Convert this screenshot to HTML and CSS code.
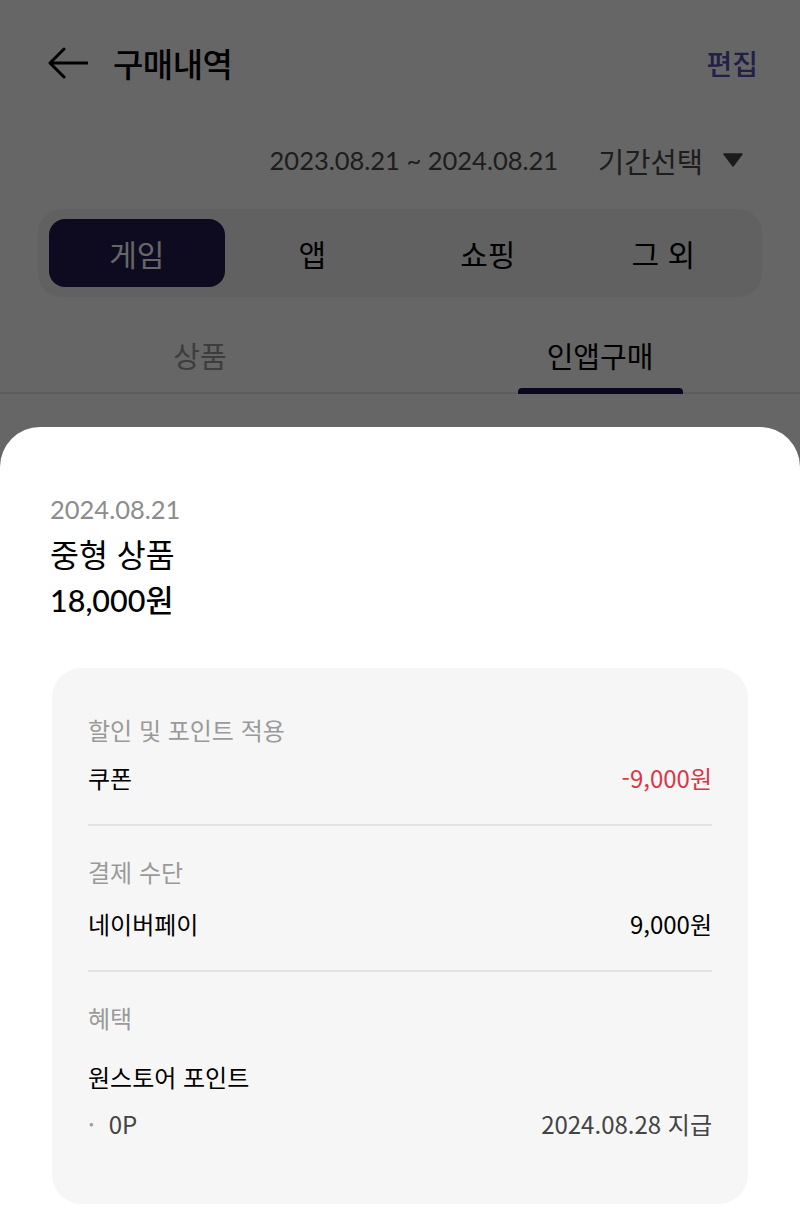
FILE: index.html
```html
<!DOCTYPE html>
<html lang="ko">
<head>
    <meta charset="UTF-8">
    <title>구매내역</title>
    <link rel="stylesheet" href="styles.css">
</head>
<body>
    <div class="page">
        <div class="header">
            <svg class="back" width="40" height="32" viewBox="0 0 40 32">
                <path d="M39 16H3M16 2L2 16L16 30" fill="none" stroke="#000" stroke-width="3" stroke-linecap="round" stroke-linejoin="round"/>
            </svg>
            <h1>구매내역</h1>
            <span class="edit">편집</span>
        </div>
        <div class="period">
            <span class="range">2023.08.21 ~ 2024.08.21</span>
            <span class="select">기간선택</span>
            <svg width="20" height="14" viewBox="0 0 20 14">
                <path d="M1 1H19L10 13Z" fill="#444" stroke="#444" stroke-width="1.5" stroke-linejoin="round"/>
            </svg>
        </div>
        <div class="segments">
            <div class="segment active">게임</div>
            <div class="segment">앱</div>
            <div class="segment">쇼핑</div>
            <div class="segment">그 외</div>
        </div>
        <div class="subtabs">
            <div class="subtab">상품</div>
            <div class="subtab active">인앱구매</div>
        </div>
    </div>

    <div class="dim"></div>

    <div class="sheet">
        <div class="date">2024.08.21</div>
        <div class="name">중형 상품</div>
        <div class="price">18,000원</div>

        <div class="card">
            <div class="section">
                <div class="label">할인 및 포인트 적용</div>
                <div class="row">
                    <span>쿠폰</span>
                    <span class="minus">-9,000원</span>
                </div>
            </div>
            <div class="section">
                <div class="label">결제 수단</div>
                <div class="row">
                    <span>네이버페이</span>
                    <span>9,000원</span>
                </div>
            </div>
            <div class="section">
                <div class="label">혜택</div>
                <div class="row benefit">원스토어 포인트</div>
                <div class="row sub">
                    <span><i class="dot">·</i>0P</span>
                    <span>2024.08.28 지급</span>
                </div>
            </div>
        </div>
    </div>
</body>
</html>
```

FILE: styles.css
```css
body {
    margin: 0;
    background-color: white;
    font-family: Lato, "Noto Sans CJK KR", sans-serif;
    color: #000;
}
.header {
    height: 126px;
    display: flex;
    align-items: center;
    padding: 0 42px 0 48px;
}
.back {
    margin-right: 25px;
}
.header h1 {
    flex: 1;
    margin: 0;
    font-family: "Noto Sans CJK KR", sans-serif;
    font-size: 33px;
    font-weight: 500;
    letter-spacing: -0.5px;
}
.edit {
    font-family: "Noto Sans CJK KR", sans-serif;
    font-size: 28px;
    font-weight: 500;
    color: #5450b4;
}
.period {
    height: 68px;
    display: flex;
    align-items: center;
    justify-content: flex-end;
    padding-right: 57px;
    color: #4a4a4a;
}
.range {
    font-size: 25.5px;
    margin-right: 40px;
}
.select {
    font-family: "Noto Sans CJK KR", sans-serif;
    font-size: 28.5px;
    margin-right: 20px;
}
.segments {
    margin: 15px 38px 0;
    padding: 10px 11px;
    display: grid;
    grid-template-columns: repeat(4, 1fr);
    background-color: #f3f3f3;
    border-radius: 24px;
}
.segment {
    height: 68px;
    display: flex;
    align-items: center;
    justify-content: center;
    font-family: "Noto Sans CJK KR", sans-serif;
    font-size: 30px;
}
.segment.active {
    background-color: #231c50;
    color: white;
    border-radius: 16px;
}
.subtabs {
    display: grid;
    grid-template-columns: 1fr 1fr;
    border-bottom: 2px solid #e8e8e8;
}
.subtab {
    display: flex;
    flex-direction: column;
    align-items: center;
    padding-top: 42px;
    font-family: "Noto Sans CJK KR", sans-serif;
    font-size: 29px;
    line-height: 32px;
    color: #999;
}
.subtab::after {
    content: "";
    display: block;
    width: 165px;
    height: 6px;
    margin-top: 17px;
    margin-bottom: -2px;
    border-radius: 4px 4px 0 0;
}
.subtab.active {
    color: #000;
}
.subtab.active::after {
    background-color: #1a1450;
}
.dim {
    position: fixed;
    top: 0;
    left: 0;
    right: 0;
    bottom: 0;
    background-color: rgba(0, 0, 0, 0.6);
}
.sheet {
    position: fixed;
    top: 427px;
    left: 0;
    right: 0;
    bottom: 0;
    padding: 62px 52px 0 50px;
    background-color: white;
    border-radius: 40px 40px 0 0;
}
.date {
    font-size: 25.5px;
    line-height: 40px;
    color: #8c8c8c;
}
.name {
    font-family: "Noto Sans CJK KR", sans-serif;
    font-size: 31.5px;
    line-height: 48px;
}
.price {
    font-size: 30.5px;
    font-weight: 500;
    line-height: 46px;
}
.card {
    margin: 45px 0 0 2px;
    padding: 16px 36px 34px;
    background-color: #f6f6f6;
    border-radius: 30px;
    font-family: "Noto Sans CJK KR", sans-serif;
    font-size: 24px;
}
.section {
    padding: 30px 0 30px;
    border-bottom: 2px solid #e3e3e3;
}
.section:last-child {
    border-bottom: none;
}
.label {
    line-height: 32px;
    color: #9a9a9a;
    margin-bottom: 16px;
}
.section + .section .label {
    margin-bottom: 20px;
}
.row {
    display: flex;
    justify-content: space-between;
    line-height: 32px;
}
.minus {
    color: #d9364a;
}
.benefit {
    margin-top: 27px;
}
.sub {
    margin-top: 15px;
    color: #444;
}
.dot {
    font-style: normal;
    margin-right: 14px;
    color: #999;
}
```
